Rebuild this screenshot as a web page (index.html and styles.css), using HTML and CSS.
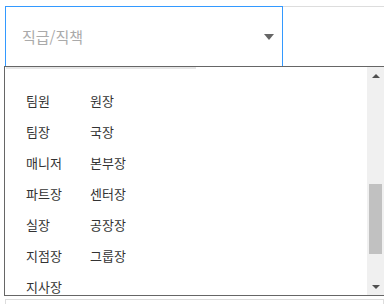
FILE: index.html
```html
<!DOCTYPE html>
<html lang="ko">
<head>
<meta charset="UTF-8">
<meta name="viewport" content="width=device-width, initial-scale=1.0">
<title>직급/직책</title>
<link rel="stylesheet" href="styles.css">
</head>
<body>

<div class="page">
    <div class="fields">
        <div class="select open">
            <span class="placeholder">직급/직책</span>
            <span class="caret"></span>
        </div>
        <div class="select other"></div>
    </div>
    <div class="next-field"></div>

    <!-- dropdown list for 직급/직책 -->
    <div class="dropdown">
        <div class="list">
            <div class="list-top"></div>
            <ul class="options">
                <li>팀원</li><li>원장</li>
                <li>팀장</li><li>국장</li>
                <li>매니저</li><li>본부장</li>
                <li>파트장</li><li>센터장</li>
                <li>실장</li><li>공장장</li>
                <li>지점장</li><li>그룹장</li>
                <li>지사장</li>
            </ul>
        </div>
        <div class="scrollbar">
            <div class="scroll-btn"><span class="arrow-up"></span></div>
            <div class="track"><div class="thumb"></div></div>
            <div class="scroll-btn"><span class="arrow-down"></span></div>
        </div>
    </div>
</div>

</body>
</html>
```

FILE: styles.css
```css
body {
    margin: 0;
    font-family: "Noto Sans CJK KR", "Noto Sans", sans-serif;
    background-color: #fff;
    overflow: hidden;
}

.page {
    position: relative;
    padding: 6px 0 0 5px;
    height: 304px;
    box-sizing: border-box;
    overflow: hidden;
}

.fields {
    display: flex;
}

.select {
    height: 60px;
    box-sizing: border-box;
    display: flex;
    align-items: center;
    justify-content: space-between;
}

.select.open {
    width: 278px;
    border: 1px solid #3399ff;
    border-bottom: none;
    padding: 0 8px 0 16px;
}

.select.other {
    flex: 1;
    border-top: 1px solid #ddd;
}

.placeholder {
    font-size: 15px;
    color: #aaa;
}

.caret {
    width: 0;
    height: 0;
    border-left: 5px solid transparent;
    border-right: 5px solid transparent;
    border-top: 6px solid #666;
    margin-top: 1px;
}

.next-field {
    margin-top: 233px;
    height: 4px;
    border: 1px solid #ddd;
    border-bottom: none;
}

.dropdown {
    position: absolute;
    top: 66px;
    left: 4px;
    width: 381px;
    height: 230px;
    box-sizing: border-box;
    border: 1px solid #666;
    background-color: #fff;
    display: flex;
}

.list {
    flex: 1;
    overflow: hidden;
}

.list-top {
    width: 190px;
    height: 2px;
    margin-left: 1px;
    background-color: #e6e6e6;
}

.options {
    list-style: none;
    margin: 0;
    padding: 16px 0 0 21px;
    display: grid;
    grid-template-columns: 64px 64px;
    grid-auto-rows: 31px;
    align-items: center;
    font-size: 13px;
    color: #333;
}

.scrollbar {
    width: 17px;
    background-color: #f0f0f0;
    display: flex;
    flex-direction: column;
}

.scroll-btn {
    height: 17px;
    display: flex;
    align-items: center;
    justify-content: center;
}

.arrow-up, .arrow-down {
    width: 0;
    height: 0;
    border-left: 4px solid transparent;
    border-right: 4px solid transparent;
}

.arrow-up {
    border-bottom: 4px solid #505050;
}

.arrow-down {
    border-top: 4px solid #505050;
}

.track {
    flex: 1;
    padding: 0 2px;
}

.thumb {
    margin-top: 100px;
    height: 70px;
    background-color: #c1c1c1;
}
```
